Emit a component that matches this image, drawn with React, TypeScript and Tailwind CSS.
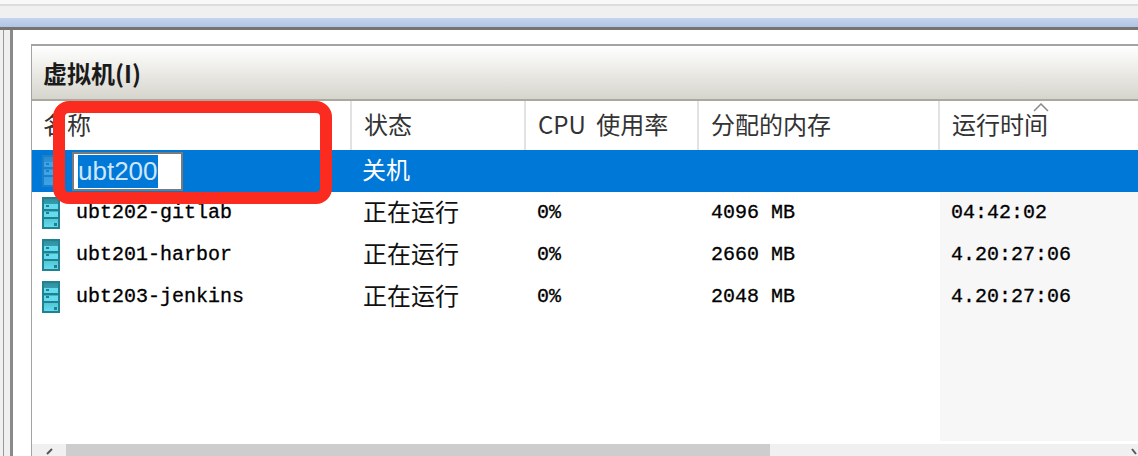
const SANS = { fontFamily: '"Noto Sans CJK SC", "Liberation Sans", sans-serif' };

function ServerIcon({ selected }: { selected?: boolean }) {
  const id = selected ? "srv-sel" : "srv";
  const top = selected ? "#2a8ccf" : "#2f8f9f";
  const low = selected ? "#3aa5ea" : "#62dcee";
  const dark = selected ? "#1f7fc4" : "#23808f";
  return (
    <svg width="18" height="32" viewBox="0 0 18 32" className="shrink-0">
      <defs>
        <linearGradient id={id} x1="0" y1="0" x2="0" y2="1">
          <stop offset="0" stopColor={top} />
          <stop offset="1" stopColor={low} />
        </linearGradient>
      </defs>
      <rect x="0" y="0" width="18" height="32" fill={dark} />
      <rect x="2" y="2" width="14" height="28" fill={`url(#${id})`} />
      <rect x="2" y="7" width="14" height="6" fill={low} />
      <rect x="2" y="15" width="14" height="5" fill={low} />
      <rect x="1" y="12" width="16" height="2" fill={dark} />
      <rect x="1" y="20" width="16" height="2" fill={dark} />
      <rect x="4" y="8" width="3" height="2" fill={dark} />
      <rect x="4" y="15" width="3" height="2" fill={dark} />
      <rect x="12" y="26" width="3" height="3" fill={dark} />
    </svg>
  );
}

const rows = [
  { name: "ubt202-gitlab", mem: "4096 MB", time: "04:42:02" },
  { name: "ubt201-harbor", mem: "2660 MB", time: "4.20:27:06" },
  { name: "ubt203-jenkins", mem: "2048 MB", time: "4.20:27:06" },
];

const mono = "font-['Liberation_Mono',monospace] text-[20px] text-black [-webkit-text-stroke:0.3px_#000]";
const status = "font-['Noto_Sans_CJK_SC',sans-serif] text-[24px] text-[#111] pb-1";
const head = "flex h-full items-center pb-1 text-[24px] text-[#333] font-['Noto_Sans_CJK_SC',sans-serif]";

export default function App() {
  return (
    <div className="flex h-[456px] w-[1138px] flex-col overflow-hidden bg-white" style={SANS}>
      <div className="h-1 shrink-0 bg-[#f8f8f8]" />
      <div className="h-0.5 shrink-0 bg-[#dcdcdc]" />
      <div className="h-3 shrink-0 bg-[#f0f0f0]" />
      <div className="h-[9px] shrink-0 bg-gradient-to-b from-[#c4d4ec] to-[#afc4e6]" />
      <div className="h-[3px] shrink-0 bg-[#77736e]" />

      <div className="flex min-h-0 flex-1">
        <div className="w-[3px] shrink-0 bg-[#f0f0f0]" />
        <div className="w-px shrink-0 bg-[#999]" />
        <div className="w-1.5 shrink-0 bg-[#f0f0f0]" />
        <div className="w-[3px] shrink-0 bg-[#8a8a8a]" />

        <div className="flex min-w-0 flex-1 flex-col pl-[18px] pt-3.5">
          <div className="relative flex min-h-0 flex-1 flex-col border-l border-t-2 border-[#a3a3a3]">
            <div className="flex h-[55px] shrink-0 items-center border-b-2 border-[#aaa89f] bg-gradient-to-b from-white to-[#d6d5cd] pl-[11px]">
              <span className="text-[24px] font-bold leading-none text-[#1a1a1a]">虚拟机(I)</span>
            </div>

            <div className="flex h-[49px] shrink-0">
              <div className="flex w-[320px] shrink-0 border-r-2 border-[#e2e2e2] pl-[11px]">
                <span className={head}>名称</span>
              </div>
              <div className="w-[174px] shrink-0 border-r-2 border-[#e2e2e2] pl-[12px]">
                <span className={head}>状态</span>
              </div>
              <div className="w-[173px] shrink-0 border-r-2 border-[#e2e2e2] pl-[12px]">
                <span className={`${head} whitespace-pre [word-spacing:5px]`}>CPU 使用率</span>
              </div>
              <div className="w-[241px] shrink-0 border-r-2 border-[#e2e2e2] pl-[12px]">
                <span className={head}>分配的内存</span>
              </div>
              <div className="relative flex-1 pl-[12px]">
                <span className={head}>运行时间</span>
                <svg width="16" height="9" viewBox="0 0 16 9" className="absolute left-[93px] top-[2px]">
                  <path d="M1 8 L8 1 L15 8" fill="none" stroke="#8a8a8a" strokeWidth="1.5" />
                </svg>
              </div>
            </div>

            <div className="flex h-[42px] shrink-0 items-center bg-[#0078d7]">
              <div className="flex h-full w-[320px] shrink-0 items-center pl-[10px]">
                <ServerIcon selected />
                <div className="ml-3 flex h-[39px] w-[111px] items-center border-2 border-[#7a7a7a] bg-white pl-[4px]">
                  <span className="bg-[#0078d7] text-[26px] leading-[33px] text-[#cfe6fa] font-['Liberation_Sans',sans-serif]">ubt200</span>
                </div>
              </div>
              <div className="pb-1 pl-[10px] text-[24px] text-white">关机</div>
            </div>

            {rows.map((r) => (
              <div key={r.name} className="flex h-[42px] shrink-0 items-center">
                <div className="flex h-full w-[320px] shrink-0 items-center pl-[10px]">
                  <ServerIcon />
                  <span className={`ml-4 ${mono}`}>{r.name}</span>
                </div>
                <div className={`w-[174px] shrink-0 pl-[11px] ${status}`}>正在运行</div>
                <div className={`w-[173px] shrink-0 pl-[11px] ${mono}`}>0%</div>
                <div className={`w-[241px] shrink-0 pl-[12px] ${mono}`}>{r.mem}</div>
                <div className={`flex h-full flex-1 items-center bg-[#f7f7f7] pl-[11px] ${mono}`}>{r.time}</div>
              </div>
            ))}

            <div className="flex min-h-0 flex-1">
              <div className="w-[908px] shrink-0" />
              <div className="flex-1 bg-[#f7f7f7]" />
            </div>
            <div className="h-[3px] shrink-0" />

            <div className="flex h-3 shrink-0 bg-[#f0f0f0]">
              <div className="flex w-[34px] shrink-0 justify-center pt-1">
                <svg width="10" height="8" viewBox="0 0 10 8"><path d="M8 1 L3 6" fill="none" stroke="#555" strokeWidth="2" /></svg>
              </div>
              <div className="w-[704px] shrink-0 bg-[#cdcdcd]" />
              <div className="flex flex-1 justify-end pr-px pt-1">
                <svg width="6" height="8" viewBox="0 0 6 8"><path d="M1 1 L5 6" fill="none" stroke="#555" strokeWidth="2" /></svg>
              </div>
            </div>

            <div className="absolute left-[21px] top-[55px] h-[103px] w-[279px] rounded-[16px] border-[12px] border-[#fb2b1f]" />
          </div>
        </div>
      </div>
    </div>
  );
}
